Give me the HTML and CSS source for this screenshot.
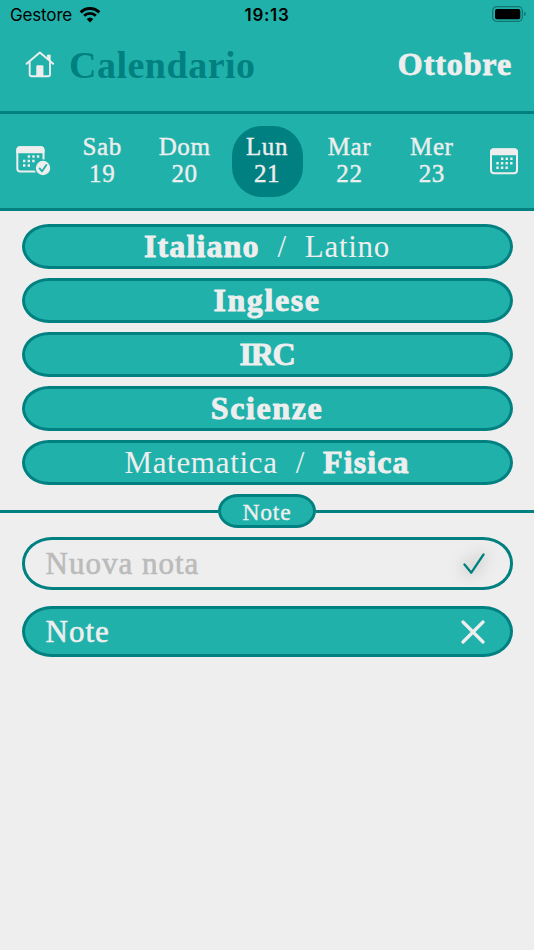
FILE: index.html
```html
<!DOCTYPE html>
<html lang="it">
<head>
    <meta charset="UTF-8">
    <meta name="viewport" content="width=device-width, initial-scale=1.0">
    <title>Calendario</title>
    <link rel="stylesheet" href="styles.css">
</head>
<body>
    <header class="header">
        <div class="status-bar">
            <div class="carrier">
                <span>Gestore</span>
                <svg class="wifi" width="22" height="16" viewBox="0 0 22 16">
                    <path d="M1.7 5.4a13.2 13.2 0 0 1 18.6 0" fill="none" stroke="#000" stroke-width="3"/>
                    <path d="M5.1 8.8a8.4 8.4 0 0 1 11.8 0" fill="none" stroke="#000" stroke-width="2.8"/>
                    <path d="M7.7 12.1a4.8 4.8 0 0 1 6.6 0L11 15.6z"/>
                </svg>
            </div>
            <span class="clock">19:13</span>
            <svg class="battery" width="34" height="16" viewBox="0 0 34 16">
                <rect x=".7" y=".7" width="29.6" height="14.6" rx="4" fill="none" stroke="#127570" stroke-width="1.2"/>
                <rect x="3" y="3" width="25.3" height="10.3" rx="2"/>
                <path d="M32 5.8q1.8.6 1.8 2.2t-1.8 2.2z" fill="#127570"/>
            </svg>
        </div>
        <div class="title-bar">
            <svg class="icon-home" width="30" height="27" viewBox="0 0 30 27">
                <path d="M1.6 12.8 14.8 1.5 28.2 12.8" fill="none" stroke="#eee" stroke-width="1.9" stroke-linecap="round" stroke-linejoin="round"/>
                <path d="M22.4 7.5V4h2.8v6" fill="#eee" stroke="#eee" stroke-width=".8"/>
                <path d="M4.7 11v12.8q0 1.4 1.5 1.4h17.3q1.5 0 1.5-1.4V11" fill="none" stroke="#eee" stroke-width="1.9"/>
                <path d="M11.3 25.5v-10q0-1.3 1.3-1.3h4.5q1.3 0 1.3 1.3v10z" fill="#eee"/>
            </svg>
            <h1 class="title">Calendario</h1>
            <span class="month">Ottobre</span>
        </div>
    </header>

    <nav class="days">
        <svg class="icon-calendar" width="36" height="30" viewBox="0 0 36 30">
            <rect x="1.3" y="1.2" width="26.2" height="24.2" rx="3" fill="none" stroke="#eee" stroke-width="2"/>
            <path d="M.3 7.200V4Q.3.200 4 .200h21q3.500 0 3.500 3.800v3.200z" fill="#eee"/>
            <path d="M11.7 10.500h13M7 15h13M7 19.500h9" fill="none" stroke="#eee" stroke-width="2.400" stroke-dasharray="2.400 2.200"/>
            <circle cx="27" cy="22" r="8.700" fill="#20b2aa"/>
            <circle cx="27" cy="22" r="7.200" fill="#eee"/>
            <path d="m23.600 22.400 2.500 2.900 4.200-6.300" fill="none" stroke="#20b2aa" stroke-width="1.800" stroke-linecap="round" stroke-linejoin="round"/>
        </svg>
        <div class="day-list">
            <div class="day"><span>Sab</span><span>19</span></div>
            <div class="day"><span>Dom</span><span>20</span></div>
            <div class="day selected"><span>Lun</span><span>21</span></div>
            <div class="day"><span>Mar</span><span>22</span></div>
            <div class="day"><span>Mer</span><span>23</span></div>
        </div>
        <svg class="icon-calendar" width="28" height="27" viewBox="0 0 28 27">
            <rect x="1" y="1.200" width="26" height="24" rx="3" fill="none" stroke="#eee" stroke-width="2"/>
            <path d="M0 7.200V4q0-3.600 3.500-3.600h21Q28 .4 28 4v3.200z" fill="#eee"/>
            <path d="M11 10.800h12M6.300 15.300h16.500M6.300 19.700h12" fill="none" stroke="#eee" stroke-width="2.400" stroke-dasharray="2.400 2.200"/>
        </svg>
    </nav>

    <main>
        <div class="subjects">
            <div class="subject"><b>Italiano</b><span class="slash">/</span><span>Latino</span></div>
            <div class="subject"><b class="wide">Inglese</b></div>
            <div class="subject"><b class="tight">IRC</b></div>
            <div class="subject"><b class="wide">Scienze</b></div>
            <div class="subject"><span>Matematica</span><span class="slash">/</span><b>Fisica</b></div>
        </div>

        <div class="divider"><span class="divider-label">Note</span></div>

        <div class="notes">
            <div class="note new-note">
                <input type="text" class="note-input" placeholder="Nuova nota">
                <svg class="icon-check" width="22" height="22" viewBox="0 0 22 22">
                    <path d="m1.500 11.500 6.800 8.200L20.500 1.500" fill="none" stroke="#008080" stroke-width="2.300" stroke-linecap="round" stroke-linejoin="round"/>
                </svg>
            </div>
            <div class="note">
                <span>Note</span>
                <svg class="icon-delete" width="24" height="24" viewBox="0 0 24 24">
                    <path d="M2 2 22 22M22 2 2 22" fill="none" stroke="#eee" stroke-width="3.200" stroke-linecap="round"/>
                </svg>
            </div>
        </div>
    </main>
</body>
</html>
```

FILE: styles.css
```css
* {
    box-sizing: border-box;
}

body {
    margin: 0;
    min-height: 100vh;
    background-color: #eee;
    color: #eee;
    font-family: "Liberation Serif", serif;
}

svg {
    display: block;
    flex-shrink: 0;
}

.header {
    height: 114px;
    background-color: #20b2aa;
    border-bottom: 3px solid #008080;
}

.status-bar {
    display: grid;
    grid-template-columns: 1fr auto 1fr;
    align-items: center;
    height: 30px;
    padding: 0 8px 0 10px;
    color: #000;
    font-family: Inter, sans-serif;
    font-size: 17px;
}

.carrier {
    display: flex;
    align-items: center;
    gap: 7px;
    letter-spacing: -0.15px;
}

.clock {
    margin-right: 2px;
    font-weight: 600;
    letter-spacing: 0.7px;
}

.battery {
    justify-self: end;
    margin-bottom: 2px;
}

.title-bar {
    display: flex;
    align-items: center;
    height: 69px;
    padding: 0 22px 0 25px;
}

.title {
    margin: 0 auto 0 14px;
    color: #008080;
    font-size: 38px;
    letter-spacing: 0.5px;
}

.month {
    font-size: 32px;
    font-weight: bold;
    letter-spacing: 0.9px;
    -webkit-text-stroke: 0.8px #eee;
}

.days {
    display: flex;
    align-items: center;
    height: 97px;
    padding: 0 16px;
    background-color: #20b2aa;
    border-bottom: 3px solid #008080;
}

.day-list {
    display: flex;
    flex: 1;
    justify-content: center;
    gap: 11.4px;
    margin-right: 8px;
}

.day {
    display: flex;
    flex-direction: column;
    align-items: center;
    width: 71px;
    height: 71px;
    padding-top: 7px;
    border-radius: 30px;
    font-size: 25px;
    line-height: 27.5px;
    letter-spacing: 0.6px;
    -webkit-text-stroke: 0.4px #eee;
}

.day.selected {
    background-color: #008080;
}

.subjects {
    display: flex;
    flex-direction: column;
    gap: 9px;
    padding: 13px 21.5px 0;
}

.subject {
    display: flex;
    align-items: center;
    justify-content: center;
    height: 45px;
    background-color: #20b2aa;
    border: 3px solid #008080;
    border-radius: 27px / 22.5px;
    font-size: 31px;
    letter-spacing: 0.7px;
}

.subject b {
    font-size: 32px;
    letter-spacing: 1.1px;
    -webkit-text-stroke: 0.9px #eee;
}

.subject .wide {
    letter-spacing: 1.6px;
}

.subject .tight {
    letter-spacing: -1.2px;
}

.slash {
    margin: 0 18px;
}

.divider {
    display: flex;
    align-items: center;
    margin-top: 9px;
}

.divider::before,
.divider::after {
    content: "";
    flex: 1;
    height: 3px;
    background-color: #008080;
}

.divider-label {
    width: 98px;
    height: 34px;
    background-color: #20b2aa;
    border: 3px solid #008080;
    border-radius: 20px / 17px;
    font-size: 23.5px;
    line-height: 30px;
    letter-spacing: 0.8px;
    text-align: center;
    -webkit-text-stroke: 0.4px #eee;
}

.notes {
    display: flex;
    flex-direction: column;
    gap: 16px;
    padding: 9px 21.5px 0;
}

.note {
    display: flex;
    align-items: center;
    justify-content: space-between;
    height: 51px;
    padding: 0 25px 0 21px;
    background-color: #20b2aa;
    border: 3px solid #008080;
    border-radius: 30px / 26px;
    font-size: 31px;
    letter-spacing: 1px;
    -webkit-text-stroke: 0.6px;
}

.new-note {
    height: 53px;
    background-color: #eee;
}

.note-input {
    width: 300px;
    padding: 0;
    border: none;
    outline: none;
    background: none;
    font: inherit;
    letter-spacing: inherit;
}

.note-input::placeholder {
    color: #bbb;
}

.icon-check {
    overflow: visible;
    filter: drop-shadow(0 0 8px rgba(0, 0, 0, 0.5));
}
```
